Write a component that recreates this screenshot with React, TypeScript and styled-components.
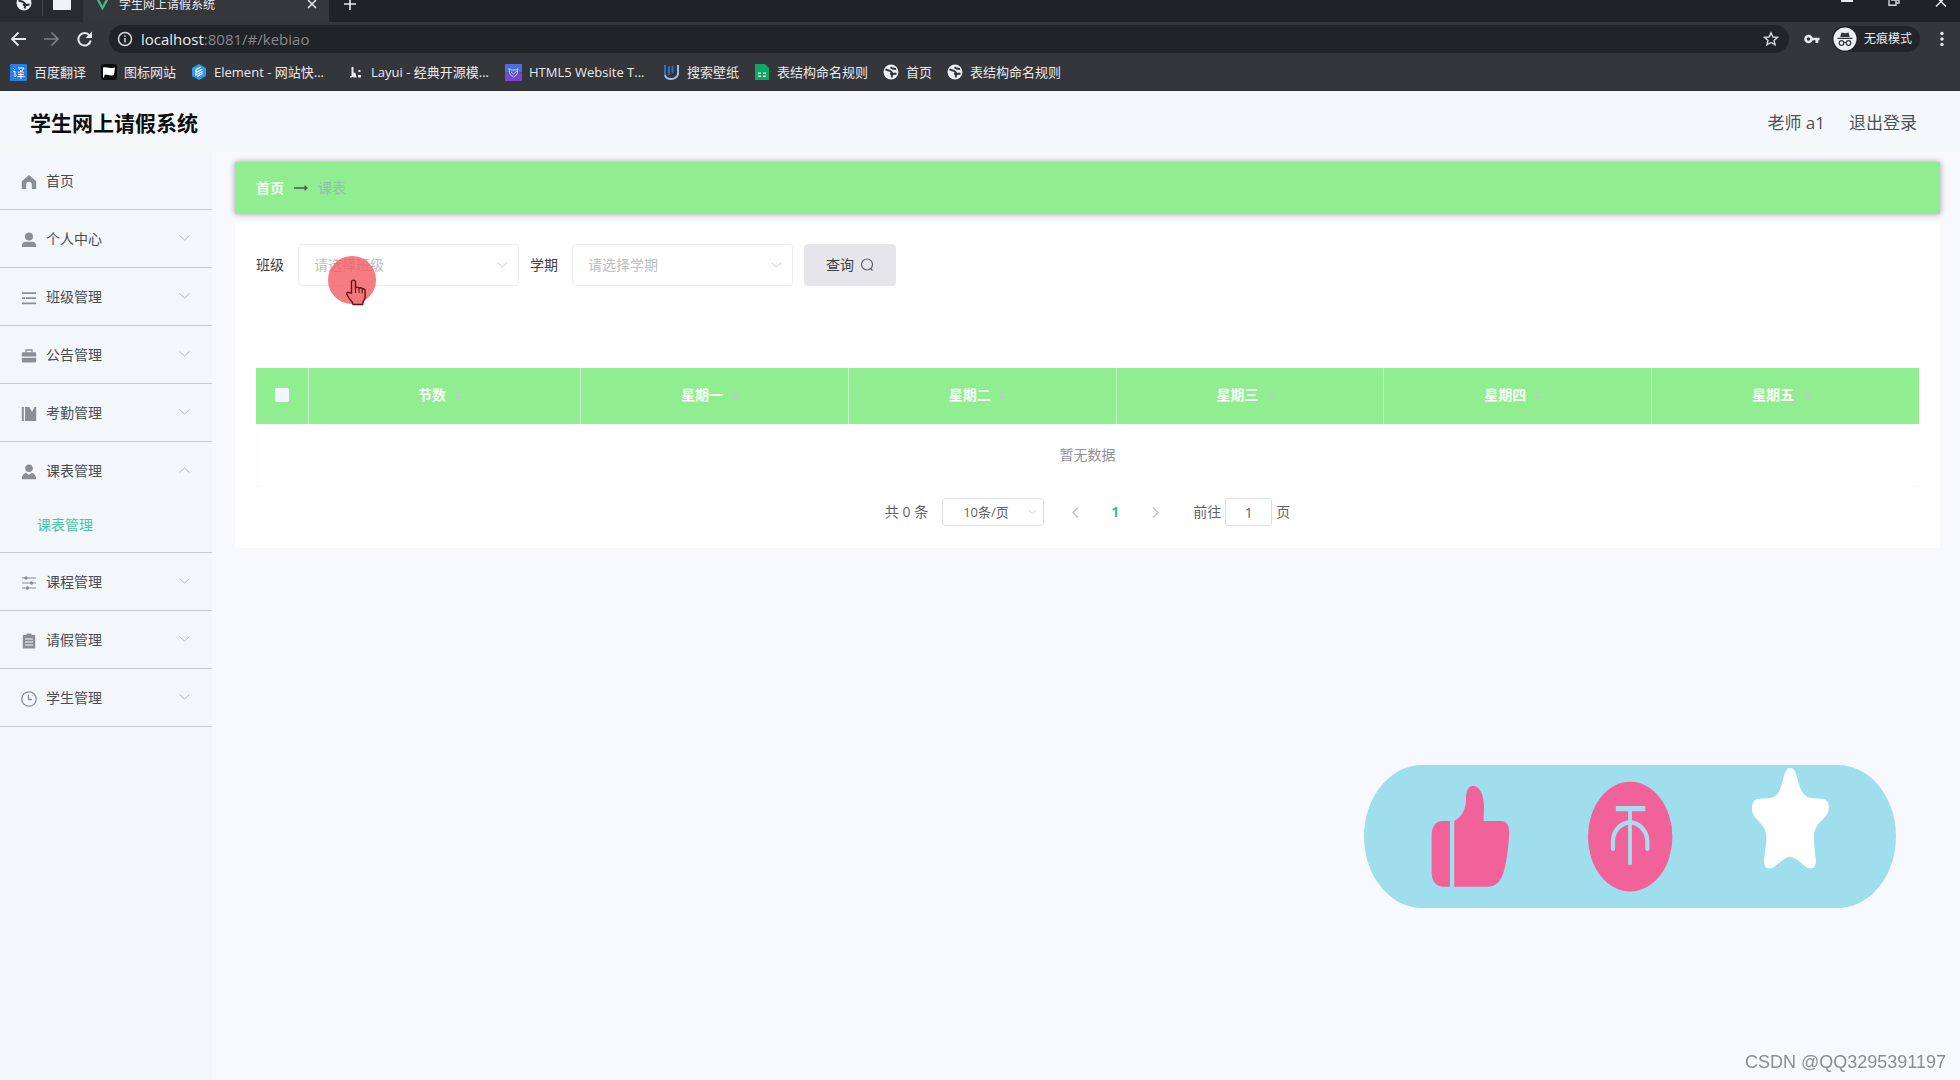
import React from "react";
import styled, { createGlobalStyle } from "styled-components";

const GlobalStyle = createGlobalStyle`
  *, *::before, *::after { box-sizing: border-box; }
  body {
    margin: 0;
    background: #f8f8ff;
    color: #4a4c50;
    font-family: "Open Sans", "Noto Sans CJK SC", sans-serif;
    font-size: 14px;
    line-height: 20px;
  }
  button, input, select { font: inherit; color: inherit; margin: 0; }
  button { border: 0; padding: 0; background: none; cursor: pointer; }
  a { color: inherit; text-decoration: none; }
  svg { display: block; flex: none; }
  ul { list-style: none; margin: 0; padding: 0; }
`;

const Shell = styled.div`
  display: flex;
  flex-direction: column;
  min-height: 100vh;
`;

/* ---------- browser chrome ---------- */

const Chrome = styled.div`
  background: #35363a;
  color: #e8eaed;
  font-size: 12px;
  line-height: 16px;
  height: 91px;
  overflow: hidden;
  border-bottom: 1px solid #2b2c2f;
`;

const TabStrip = styled.div`
  display: flex;
  height: 22px;
  background: #202226;
`;

const PinnedTabs = styled.div`
  display: flex;
  align-items: flex-start;
  gap: 10px;
  width: 83px;
  padding-left: 16px;
  background: #292a2d;
`;

const PinDivider = styled.span`
  width: 1px;
  height: 16px;
  background: #4a4c50;
`;

const Tab = styled.div`
  display: flex;
  align-items: flex-start;
  gap: 11px;
  width: 246px;
  padding: 0 12px 0 14px;
  background: #35373b;
`;

const TabTitle = styled.span`
  flex: 1;
  margin-top: -3px;
  white-space: nowrap;
`;

const ChromeButton = styled.button`
  display: flex;
  align-items: center;
  justify-content: center;
  flex: none;
`;

const NewTab = styled(ChromeButton)`
  align-items: flex-start;
  margin-left: 14px;
`;

const WindowButtons = styled.div`
  display: flex;
  align-items: flex-start;
  gap: 35px;
  margin-left: auto;
  padding-right: 13px;
`;

const Toolbar = styled.div`
  display: flex;
  align-items: center;
  height: 32px;
  margin-top: 1px;
  padding: 0 12px 0 10px;
`;

const NavButtons = styled.div`
  display: flex;
  gap: 16px;
  width: 99px;
`;

const AddressBar = styled.div`
  display: flex;
  flex: 1;
  align-items: center;
  gap: 8px;
  height: 28px;
  padding: 0 10px 0 8px;
  border-radius: 14px;
  background: #202327;
`;

const Url = styled.div`
  flex: 1;
  padding-bottom: 1px;
  font-size: 15px;
  line-height: 20px;
  color: #85888c;
`;

const Host = styled.span`
  color: #e8eaed;
`;

const ToolbarEnd = styled.div`
  display: flex;
  align-items: center;
  gap: 12px;
  margin-left: 15px;
`;

const Incognito = styled.div`
  display: flex;
  align-items: center;
  gap: 7px;
  height: 26px;
  padding: 0 8px 0 1px;
  border-radius: 13px;
  background: #222428;
`;

const Bookmarks = styled.nav`
  display: flex;
  align-items: center;
  gap: 15px;
  height: 34px;
  padding-left: 10px;
  font-size: 13px;
`;

const Bookmark = styled.a`
  display: flex;
  align-items: center;
  gap: 7px;
  white-space: nowrap;
`;

const BookmarkLabel = styled.span<{ $wide?: boolean }>`
  ${(p) => p.$wide && "width: 119px;"}
`;

/* ---------- application ---------- */

const AppHeader = styled.header`
  display: flex;
  align-items: center;
  justify-content: space-between;
  height: 61px;
  padding: 2px 43px 0 30px;
  background: #f5f8fb;
`;

const Brand = styled.h1`
  margin: 0;
  font-size: 21px;
  line-height: 28px;
  font-weight: 700;
  color: #0c0d0f;
`;

const Account = styled.div`
  display: flex;
  gap: 24px;
  font-size: 17px;
  line-height: 24px;
  color: #4f5155;
`;

const Body = styled.div`
  display: flex;
  flex: 1;
`;

const Sidebar = styled.nav`
  flex: none;
  width: 212px;
  background: #f3f7fb;
`;

const MenuItem = styled.li`
  border-bottom: 1px solid #c8cbd0;
`;

const MenuButton = styled.button`
  display: flex;
  align-items: center;
  gap: 9px;
  width: 100%;
  height: 57px;
  padding: 2px 22px 0 21px;
  text-align: left;
`;

const MenuText = styled.span`
  flex: 1;
  padding-bottom: 2px;
`;

const Arrow = styled.span<{ $open?: boolean }>`
  padding-bottom: 4px;
  color: #b3b6bb;
  svg { ${(p) => p.$open && "transform: rotate(180deg);"} }
`;

const SubLink = styled.a`
  display: block;
  height: 53px;
  padding: 6px 0 0 37px;
  line-height: 40px;
  color: #4cc3a2;
`;

const Main = styled.main`
  flex: 1;
  min-width: 0;
  padding: 10px 20px 40px 23px;
`;

const Breadcrumb = styled.nav`
  display: flex;
  align-items: center;
  gap: 10px;
  height: 52px;
  padding: 0 21px;
  background: #90ee90;
  box-shadow: 0 0 6px rgba(60, 40, 70, 0.45);
  color: #f4fff4;
`;

const CrumbHome = styled.a`
  font-weight: 700;
`;

const CrumbCurrent = styled.span`
  color: #8fbfb2;
`;

const Card = styled.section`
  margin-top: 8px;
  padding: 22px 21px;
  background: #fff;
`;

const Filters = styled.form`
  display: flex;
  align-items: center;
  gap: 11px;
`;

const FieldLabel = styled.label`
  color: #3c3e42;
`;

const SelectBox = styled.span<{ $small?: boolean }>`
  display: flex;
  position: relative;
  width: ${(p) => (p.$small ? "102px" : "221px")};
  font-size: ${(p) => (p.$small ? "13px" : "14px")};
  color: ${(p) => (p.$small ? "#606266" : "#bcbec3")};
  svg {
    position: absolute;
    right: ${(p) => (p.$small ? "7px" : "11px")};
    top: 50%;
    margin-top: -3px;
    color: #c4c7cc;
    pointer-events: none;
  }
`;

const Select = styled.select<{ $small?: boolean }>`
  appearance: none;
  width: 100%;
  height: ${(p) => (p.$small ? "28px" : "42px")};
  padding: ${(p) => (p.$small ? "0 20px" : "0 15px")};
  border: 1px solid ${(p) => (p.$small ? "#dcdfe6" : "#ebedf1")};
  border-radius: 4px;
  background: #fff;
  outline: 0;
`;

const QueryButton = styled.button`
  display: flex;
  align-items: center;
  justify-content: center;
  gap: 6px;
  width: 92px;
  height: 42px;
  border-radius: 4px;
  background: #e6e6ea;
  color: #3c3e42;
`;

const FilterField = styled.div`
  display: flex;
  align-items: center;
  gap: 14px;
`;

const Table = styled.table`
  width: 100%;
  margin-top: 82px;
  border-collapse: separate;
  border-spacing: 0;
  table-layout: fixed;
`;

const CheckCol = styled.col`
  width: 52px;
`;

const PeriodCol = styled.col`
  width: 272px;
`;

const HeadCell = styled.th`
  height: 56px;
  padding: 0 0 2px;
  background: #90ee90;
  color: #fafffa;
  font-weight: 700;
  & + & { border-left: 1px solid #c3f5c3; }
`;

const HeadInner = styled.div`
  display: flex;
  align-items: center;
  justify-content: center;
`;

const SortButton = styled.button`
  display: flex;
  justify-content: center;
  width: 25px;
  color: #aed5b4;
`;

const Check = styled.input`
  appearance: none;
  display: block;
  width: 14px;
  height: 14px;
  margin: 0;
  border-radius: 2px;
  background: #f4f6ff;
`;

const EmptyCell = styled.td`
  height: 63px;
  border: 1px solid #fafaff;
  border-top: 0;
  text-align: center;
  color: #909399;
`;

const Pagination = styled.div`
  display: flex;
  align-items: center;
  justify-content: center;
  height: 28px;
  margin-top: 11px;
  color: #606266;
`;

const Total = styled.span`
  margin-right: 14px;
`;

const Pager = styled.div`
  display: flex;
  align-items: center;
  margin: 0 18px 0 11px;
`;

const PageButton = styled.button<{ $active?: boolean }>`
  display: flex;
  align-items: center;
  justify-content: center;
  width: 40px;
  height: 28px;
  font-weight: 700;
  color: ${(p) => (p.$active ? "#2fbf9b" : "#bfc2c8")};
`;

const Jump = styled.label`
  display: flex;
  align-items: center;
  gap: 4px;
`;

const JumpInput = styled.input`
  width: 47px;
  height: 28px;
  padding: 0;
  border: 1px solid #dcdfe6;
  border-radius: 3px;
  background: #fff;
  text-align: center;
`;

/* ---------- floating layers ---------- */

const Actions = styled.div`
  position: fixed;
  right: 64px;
  bottom: 172px;
`;

const Pointer = styled.div`
  position: fixed;
  left: 328px;
  top: 256px;
  pointer-events: none;
`;

const Watermark = styled.div`
  position: fixed;
  right: 14px;
  bottom: 6px;
  font-family: "Liberation Sans", sans-serif;
  font-size: 18px;
  line-height: 24px;
  color: #8c8c92;
`;

/* ---------- icons ---------- */

const Globe = () => (
  <svg width="16" height="16" viewBox="0 0 16 16">
    <circle cx="8" cy="8" r="7.500" fill="#eef0f3" />
    <path d="M2.500 5.500L7 6.800 9 8.500 7.200 10.500M7.500 3.200l2 1.300 3.500.5M8.500 13.500l1-3.300 4-.7" fill="none" stroke="#35363a" strokeWidth="1.900" />
  </svg>
);

const Chevron = ({ size = 11 }: { size?: number }) => (
  <svg width={size} height="6" viewBox="0 0 11 6" fill="none" stroke="currentColor">
    <path d="M.5.5l5 4.500 5-4.500" />
  </svg>
);

const menuIcons: Record<string, React.ReactNode> = {
  home: <path d="M8 1L.8 7.200V15h4.400v-4.500a2.800 2.800 0 0 1 5.600 0V15h4.400V7.200z" />,
  user: (
    <>
      <circle cx="8" cy="4.500" r="4" />
      <path d="M1 15v-1.500a4 4 0 0 1 4-3.700h6a4 4 0 0 1 4 3.700V15z" />
    </>
  ),
  list: <path d="M1 2.200h14v1.800H1zM1 7.200h3v1.700H1zM5 7.200h10v1.700H5zM1 12.500h14v1.800H1z" />,
  bag: (
    <>
      <path d="M5 4.500V2h6v2.500" fill="none" stroke="currentColor" strokeWidth="1.300" />
      <path d="M2 4.200h12a1.200 1.200 0 0 1 1.200 1.200v3.100H.8V5.400A1.200 1.200 0 0 1 2 4.200zM.8 9.700h14.400V13a1.500 1.500 0 0 1-1.500 1.500H2.300A1.500 1.500 0 0 1 .8 13z" />
    </>
  ),
  books: <path d="M.8 1h2v14h-2zM4 1h4.500v14H4zM8.500 1l2.500 5 2.500-5h1.700v14H8z" />,
  person: (
    <>
      <circle cx="8" cy="4.200" r="3.800" />
      <path d="M.8 15.200c0-3.200 1.700-5.700 4.500-6.400L8 11l2.700-2.200c2.800.7 4.500 3.200 4.500 6.400z" />
    </>
  ),
  sliders: (
    <>
      <path d="M1 3h14M1 8h14M1 13h14" stroke="currentColor" strokeWidth="1.200" />
      <circle cx="5" cy="3" r="1.700" />
      <circle cx="10.500" cy="8" r="1.700" />
      <circle cx="6.500" cy="13" r="1.700" />
    </>
  ),
  clipboard: (
    <>
      <path d="M1.800 2h12.400v13.500H1.800zM5.500.5h5V3h-5z" />
      <path d="M4 6h8M4 9h8M4 12h8" stroke="#f3f7fb" strokeWidth="1" />
    </>
  ),
  clock: (
    <>
      <circle cx="8" cy="8" r="7.200" fill="none" stroke="currentColor" strokeWidth="1.300" />
      <path d="M7.500 4v4.500H11" fill="none" stroke="currentColor" strokeWidth="1.300" />
    </>
  ),
};

const MenuIcon = ({ name }: { name: string }) => (
  <svg width="16" height="16" viewBox="0 0 16 16" fill="currentColor" color="#8b8e93">
    {menuIcons[name]}
  </svg>
);

const bookmarks: { label: string; wide?: boolean; icon: React.ReactNode }[] = [
  {
    label: "百度翻译",
    icon: (
      <svg width="17" height="17" viewBox="0 0 17 17">
        <rect width="17" height="17" rx="1" fill="#2480e8" />
        <path d="M3 4l1.500 1.500M3 7.500h2V13l1.500-1.500M8 4h6c-1 2.500-3.500 4-6 4.500M9 5c1 1.500 3 3 5 3.500M8 10.500h6M7.500 12.500h7M11 8.500V15" fill="none" stroke="#fff" />
      </svg>
    ),
  },
  {
    label: "图标网站",
    icon: (
      <svg width="16" height="16" viewBox="0 0 16 16">
        <rect width="16" height="16" rx="3" fill="#0b0b0c" />
        <path d="M2 3.500c3-1 5 1.500 12 0l-1 7.500c-5 1.500-6.500-1-9.500 0l-.5 2.500H2z" fill="#fff" />
      </svg>
    ),
  },
  {
    label: "Element - 网站快...",
    wide: true,
    icon: (
      <svg width="16" height="16" viewBox="0 0 16 16">
        <path d="M8 0l7 4v8l-7 4-7-4V4z" fill="#2b9cf0" />
        <path d="M11.500 5L5 8.700V11l6.500-3.500M5 8V5.500L10 3M6 12.500l5.500-3" fill="none" stroke="#fff" strokeWidth="1.200" />
      </svg>
    ),
  },
  {
    label: "Layui - 经典开源模...",
    wide: true,
    icon: (
      <svg width="16" height="16" viewBox="0 0 16 16" fill="#e8eaed">
        <path d="M3.500 3h2v10h-2zM2 12h2v1.500H2zM5.500 8.500l2 .5 1 4.500h-3zM10.500 6h2v2h-2zM10 11h3v2.500h-3z" />
      </svg>
    ),
  },
  {
    label: "HTML5 Website T...",
    wide: true,
    icon: (
      <svg width="17" height="17" viewBox="0 0 17 17">
        <rect width="17" height="8.500" fill="#4a6fe0" />
        <rect y="8.500" width="17" height="8.500" fill="#7347cf" />
        <path d="M4 4.500l2 1.500h5l2-1.500-1 6-3.500 2.500L5 10.500zM6 8l2.500 2L12 7" fill="none" stroke="#b9c3fb" />
      </svg>
    ),
  },
  {
    label: "搜索壁纸",
    icon: (
      <svg width="17" height="17" viewBox="0 0 17 17" fill="none" strokeWidth="2">
        <path d="M2 1v10M6 2v9M9.500 2v7" stroke="#2e6fb5" />
        <path d="M2 11c1 5 11 6 13-1V1" stroke="#8fc3ea" />
      </svg>
    ),
  },
  {
    label: "表结构命名规则",
    icon: (
      <svg width="16" height="16" viewBox="0 0 16 16">
        <path d="M1 0h10l4 4v12H1z" fill="#10a765" />
        <path d="M4 8.500h3v1.500H4zM9 8.500h3v1.500H9zM4 11.500h3V13H4zM9 11.500h3V13H9z" fill="#d8f5e6" />
      </svg>
    ),
  },
  { label: "首页", icon: <Globe /> },
  { label: "表结构命名规则", icon: <Globe /> },
];

const menu = [
  { label: "首页", icon: "home", leaf: true },
  { label: "个人中心", icon: "user" },
  { label: "班级管理", icon: "list" },
  { label: "公告管理", icon: "bag" },
  { label: "考勤管理", icon: "books" },
  { label: "课表管理", icon: "person", child: "课表管理" },
  { label: "课程管理", icon: "sliders" },
  { label: "请假管理", icon: "clipboard" },
  { label: "学生管理", icon: "clock" },
];

const columns = ["节数", "星期一", "星期二", "星期三", "星期四", "星期五"];

function BrowserChrome() {
  return (
    <Chrome>
      <TabStrip>
        <PinnedTabs>
          <svg width="16" height="11" viewBox="0 5 16 11">
            <circle cx="8" cy="8" r="7.500" fill="#eef0f3" />
            <path d="M2.500 5.500L7 6.800 9 8.500 7.200 10.500M8.500 13.500l1-3.300 4-.7" fill="none" stroke="#292a2d" strokeWidth="1.900" />
          </svg>
          <PinDivider />
          <svg width="18" height="10" viewBox="0 0 18 10"><path d="M0 0h18v10H0z" fill="#f1f2f4" /></svg>
        </PinnedTabs>
        <Tab>
          <svg width="11" height="10" viewBox="0 0 11 10" fill="none" strokeWidth="2.400">
            <path d="M.5-1L5.500 8l5-9" stroke="#41b883" />
          </svg>
          <TabTitle>学生网上请假系统</TabTitle>
          <ChromeButton aria-label="关闭标签页">
            <svg width="10" height="9" viewBox="0 0 10 9" stroke="#e8eaed" strokeWidth="1.500"><path d="M1 0l8 8M9 0L1 8" /></svg>
          </ChromeButton>
        </Tab>
        <NewTab aria-label="新标签页">
          <svg width="14" height="11" viewBox="0 0 14 11" stroke="#e8eaed" strokeWidth="1.600"><path d="M1 4h12M7-2v12" /></svg>
        </NewTab>
        <WindowButtons>
          <ChromeButton aria-label="最小化">
            <svg width="12" height="7" viewBox="0 0 12 7"><path d="M0 0h12v2H0z" fill="#e8eaed" /></svg>
          </ChromeButton>
          <ChromeButton aria-label="还原">
            <svg width="12" height="7" viewBox="0 0 12 7" fill="none" stroke="#d5d7da" strokeWidth="1.400"><path d="M1 0v5.300h7V0M3 0h8v3H8" /></svg>
          </ChromeButton>
          <ChromeButton aria-label="关闭">
            <svg width="12" height="7" viewBox="0 0 12 7" stroke="#e8eaed" strokeWidth="1.400"><path d="M1 6.500l8-8M3-1.500l8 8" /></svg>
          </ChromeButton>
        </WindowButtons>
      </TabStrip>
      <Toolbar>
        <NavButtons>
          <ChromeButton aria-label="后退">
            <svg width="17" height="16" viewBox="0 0 17 16" fill="none" stroke="#e8eaed" strokeWidth="1.800"><path d="M16 8H2M8.500 1.500L2 8l6.500 6.500" /></svg>
          </ChromeButton>
          <ChromeButton aria-label="前进">
            <svg width="17" height="16" viewBox="0 0 17 16" fill="none" stroke="#7e8185" strokeWidth="1.600"><path d="M1 8h14M8.500 1.500L15 8l-6.500 6.500" /></svg>
          </ChromeButton>
          <ChromeButton aria-label="刷新">
            <svg width="17" height="16" viewBox="0 0 17 16"><path d="M13.500 4.500A6.200 6.200 0 1 0 14.700 9.500" fill="none" stroke="#e8eaed" strokeWidth="2" /><path d="M16 .5V7H9.500z" fill="#e8eaed" /></svg>
          </ChromeButton>
        </NavButtons>
        <AddressBar>
          <svg width="16" height="16" viewBox="0 0 16 16" fill="none" stroke="#d5d7da" strokeWidth="1.500"><circle cx="8" cy="8" r="6.500" /><path d="M8 7v4.500M8 4.200v1.500" /></svg>
          <Url role="textbox" aria-label="地址"><Host>localhost</Host>:8081/#/kebiao</Url>
          <ChromeButton aria-label="收藏">
            <svg width="16" height="16" viewBox="0 0 16 16" fill="none" stroke="#d5d7da" strokeWidth="1.400"><path d="M8 1.800l1.900 4.200 4.600.4-3.500 3 1.100 4.500L8 11.500l-4.100 2.400L5 9.400l-3.500-3 4.600-.4z" /></svg>
          </ChromeButton>
        </AddressBar>
        <ToolbarEnd>
          <svg width="16" height="10" viewBox="0 0 16 10"><circle cx="4.500" cy="5" r="3" fill="none" stroke="#e8eaed" strokeWidth="2.600" /><path d="M7 3.700h8.500v2.600h-1.200V9h-2.800V6.300H7z" fill="#e8eaed" /></svg>
          <Incognito>
            <svg width="24" height="24" viewBox="0 0 24 24">
              <circle cx="12" cy="12" r="11.500" fill="#eef0f3" />
              <path d="M8.500 5.500l3.500.8 3.500-.8L16.800 10H7.200zM4.500 10.800h15v1.300h-15z" fill="#35363a" />
              <path d="M11 15.500h2" stroke="#35363a" />
              <circle cx="8.500" cy="16" r="2.300" fill="none" stroke="#35363a" strokeWidth="1.200" />
              <circle cx="15.500" cy="16" r="2.300" fill="none" stroke="#35363a" strokeWidth="1.200" />
            </svg>
            无痕模式
          </Incognito>
          <ChromeButton aria-label="菜单">
            <svg width="16" height="16" viewBox="0 0 16 16" fill="#e8eaed"><circle cx="10" cy="2.500" r="1.700" /><circle cx="10" cy="8" r="1.700" /><circle cx="10" cy="13.500" r="1.700" /></svg>
          </ChromeButton>
        </ToolbarEnd>
      </Toolbar>
      <Bookmarks aria-label="书签">
        {bookmarks.map((b, i) => (
          <Bookmark key={i} href="#">
            {b.icon}
            <BookmarkLabel $wide={b.wide}>{b.label}</BookmarkLabel>
          </Bookmark>
        ))}
      </Bookmarks>
    </Chrome>
  );
}

function SideMenu() {
  return (
    <Sidebar aria-label="主菜单">
      <ul>
        {menu.map((m) => (
          <MenuItem key={m.label}>
            <MenuButton aria-expanded={m.leaf ? undefined : Boolean(m.child)}>
              <MenuIcon name={m.icon} />
              <MenuText>{m.label}</MenuText>
              {!m.leaf && (
                <Arrow $open={Boolean(m.child)}><Chevron /></Arrow>
              )}
            </MenuButton>
            {m.child && <SubLink href="#/kebiao">{m.child}</SubLink>}
          </MenuItem>
        ))}
      </ul>
    </Sidebar>
  );
}

function FilterSelect({ id, label, placeholder }: { id: string; label: string; placeholder: string }) {
  return (
    <FilterField>
      <FieldLabel htmlFor={id}>{label}</FieldLabel>
      <SelectBox>
        <Select id={id} defaultValue="">
          <option value="">{placeholder}</option>
        </Select>
        <Chevron />
      </SelectBox>
    </FilterField>
  );
}

export default function App() {
  return (
    <Shell>
      <GlobalStyle />
      <BrowserChrome />
      <AppHeader>
        <Brand>学生网上请假系统</Brand>
        <Account>
          <span>老师 a1</span>
          <a href="#/login">退出登录</a>
        </Account>
      </AppHeader>
      <Body>
        <SideMenu />
        <Main>
          <Breadcrumb aria-label="面包屑">
            <CrumbHome href="#/">首页</CrumbHome>
            <svg width="14" height="6" viewBox="0 0 14 6" fill="none" stroke="#46604a" strokeWidth="1.300"><path d="M0 3h13M10.500.8L13 3l-2.500 2.200" /></svg>
            <CrumbCurrent>课表</CrumbCurrent>
          </Breadcrumb>
          <Card>
            <Filters onSubmit={(e) => e.preventDefault()}>
              <FilterSelect id="banji" label="班级" placeholder="请选择班级" />
              <FilterSelect id="xueqi" label="学期" placeholder="请选择学期" />
              <QueryButton type="submit">
                查询
                <svg width="14" height="14" viewBox="0 0 14 14" fill="none" stroke="#5b5d62" strokeWidth="1.200"><circle cx="7" cy="6.500" r="5.500" /><path d="M10.500 10.500l2 2" /></svg>
              </QueryButton>
            </Filters>
            <Table>
              <colgroup>
                <CheckCol />
                <PeriodCol />
                {columns.slice(1).map((c) => <col key={c} />)}
              </colgroup>
              <thead>
                <tr>
                  <HeadCell><HeadInner><Check type="checkbox" aria-label="全选" /></HeadInner></HeadCell>
                  {columns.map((c) => (
                    <HeadCell key={c}>
                      <HeadInner>
                        {c}
                        <SortButton aria-label={`按${c}排序`}>
                          <svg width="8" height="12" viewBox="0 0 8 12" fill="currentColor"><path d="M4 1l3.500 4h-7zM4 11l3.500-4h-7z" /></svg>
                        </SortButton>
                      </HeadInner>
                    </HeadCell>
                  ))}
                </tr>
              </thead>
              <tbody>
                <tr><EmptyCell colSpan={7}>暂无数据</EmptyCell></tr>
              </tbody>
            </Table>
            <Pagination>
              <Total>共 0 条</Total>
              <SelectBox $small>
                <Select $small aria-label="每页条数" defaultValue="10">
                  <option value="10">10条/页</option>
                </Select>
                <Chevron size={9} />
              </SelectBox>
              <Pager>
                <PageButton aria-label="上一页">
                  <svg width="7" height="11" viewBox="0 0 7 11" fill="none" stroke="currentColor" strokeWidth="1.400"><path d="M6 .5l-5 5 5 5" /></svg>
                </PageButton>
                <PageButton $active>1</PageButton>
                <PageButton aria-label="下一页">
                  <svg width="7" height="11" viewBox="0 0 7 11" fill="none" stroke="currentColor" strokeWidth="1.400"><path d="M1 .5l5 5-5 5" /></svg>
                </PageButton>
              </Pager>
              <Jump>
                前往
                <JumpInput defaultValue="1" />
                页
              </Jump>
            </Pagination>
          </Card>
        </Main>
      </Body>

      <Actions>
        <svg width="532" height="143" viewBox="62 75 1392 429" preserveAspectRatio="none">
          <path d="M214 75h1088c84 0 152 96 152 214.500S1386 504 1302 504H214C130 504 62 408 62 289.500S130 75 214 75z" fill="#9fdeec" />
          <path d="M287 243h-20c-17 0-28 18-28 42v112c0 26 12 43 28 43h20z" fill="#f06299" />
          <path d="M298 243c20-12 31-34 31-69 0-24 8-37 19-37 16 0 28 28 28 64 0 16-1 30-1 42h46c14 0 22 14 21 38-2 40-6 76-13 108-7 34-21 51-45 51h-86z" fill="#f06299" />
          <ellipse cx="758.500" cy="290" rx="110.500" ry="164.500" fill="#f06299" />
          <path d="M721 198h77v16h-35v27c27 5 46 31 46 64v22c0 8-11 8-11 0v-22c0-26-15-46-35-51v120h-10V254c-20 5-34 25-34 51v22c0 8-11 8-11 0v-22c0-33 18-59 45-64v-27h-32z" fill="#a9dcec" />
          <path d="M1177 84c9 0 14 10 18 28 7 34 14 52 28 59 12 6 24 4 38 5 12 1 18 11 17 29-1 18-9 26-18 36-15 17-21 31-21 52 0 22 3 41 5 63 2 19-3 28-14 29-9 0-15-8-25-17-12-11-20-17-28-17s-16 6-28 17c-10 9-17 17-26 17-11-1-16-10-14-29 2-23 6-42 6-64 0-21-8-34-21-49-9-11-17-20-17-38s7-28 19-29c14-1 26 1 38-5 14-7 18-25 26-59 4-18 9-28 17-28z" fill="#fff" />
        </svg>
      </Actions>
      <Pointer>
        <svg width="48" height="50" viewBox="0 0 48 50">
          <circle cx="24" cy="24" r="24" fill="#f25b60" fillOpacity="0.800" />
          <path d="M23.500 37V26c0-2.500 4-2.500 4 0v6c1-1.300 3-1.200 3.500.3 1-1 2.800-.7 3.200.8 1.200-.8 2.900-.2 2.900 1.600V41c0 2-1.500 3.500-2 5l-.5 2.500h-9.500l-1-2.500c-2-2.200-4-4.800-5.200-7.500-.8-2 1.400-3 2.700-1.600z" fill="#f4777b" stroke="#5c1219" strokeWidth="1.400" />
          <path d="M27.500 32v5M31 33v4M34.200 34v3.500" stroke="#5c1219" />
        </svg>
      </Pointer>
      <Watermark>CSDN @QQ3295391197</Watermark>
    </Shell>
  );
}
